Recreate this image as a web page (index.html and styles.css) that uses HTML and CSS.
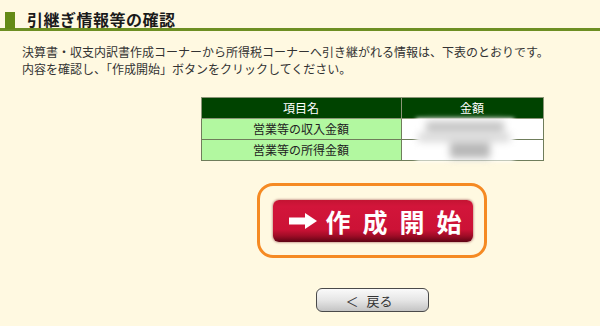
FILE: index.html
```html
<!DOCTYPE html>
<html lang="ja">
<head>
<meta charset="utf-8">
<link rel="stylesheet" href="styles.css">
</head>
<body>
<h1 class="heading"><span class="heading-mark"></span><span class="heading-text">引継ぎ情報等の確認</span></h1>
<p class="intro">決算書・収支内訳書作成コーナーから所得税コーナーへ引き継がれる情報は、下表のとおりです。<br>内容を確認し、「作成開始」ボタンをクリックしてください。</p>
<div class="center">
  <div class="table-wrap">
    <table class="info">
      <thead>
        <tr><th class="col-name">項目名</th><th class="col-amount">金額</th></tr>
      </thead>
      <tbody>
        <tr><td class="name">営業等の収入金額</td><td class="amount"></td></tr>
        <tr><td class="name">営業等の所得金額</td><td class="amount"></td></tr>
      </tbody>
    </table>
    <div class="redact"><span class="blob b1"></span><span class="blob b2"></span><span class="blob b3"></span></div>
  </div>
  <div class="start-frame">
    <button class="start-btn" type="button">
      <svg class="arrow" width="28" height="16" viewBox="0 0 28 16"><polygon points="0,4.5 16,4.5 16,0 28,8 16,16 16,11.5 0,11.5" fill="#fff"/></svg>
      <span class="start-label">作成開始</span>
    </button>
  </div>
  <button class="back-btn" type="button"><span class="lt">＜</span><span>戻る</span></button>
</div>
</body>
</html>
```
FILE: styles.css
```css
html, body {
  margin: 0;
  padding: 0;
  background: #fff9e1;
  font-family: "Noto Sans CJK JP", "Noto Sans", sans-serif;
  color: #222;
  height: 326px;
  overflow: hidden;
}
.heading {
  margin: 12px 0 0 0;
  height: 16px;
  display: flex;
  align-items: flex-end;
  border-bottom: 3px solid #6d8f22;
  font-size: 16px;
  line-height: 16px;
  font-weight: bold;
}
.heading-mark {
  width: 10px;
  height: 17px;
  margin: 0 12px -1px 5px;
  background: #648a15;
  flex: none;
}
.heading-text {
  color: #1a1a1a;
  letter-spacing: 0.5px;
  position: relative;
  top: -1px;
}
.intro {
  margin: 12px 0 0 22px;
  font-size: 12px;
  line-height: 17px;
  color: #333;
}
.center {
  padding-left: 144px;
  display: flex;
  flex-direction: column;
  align-items: center;
}
.table-wrap {
  margin-top: 20px;
  position: relative;
}
.info {
  border-collapse: collapse;
  width: 343px;
  font-size: 12px;
  border: 1px solid #8c9578;
}
.info th {
  background: #004300;
  color: #fff;
  font-weight: normal;
  height: 20px;
  padding: 0;
  border: 1px solid #8c9578;
  line-height: 20px;
}
.col-name { width: 199px; }
.info td {
  height: 20px;
  padding: 0;
  border: 1px solid #6f7d5b;
  line-height: 20px;
}
.name {
  background: #b2f8a0;
  text-align: center;
  color: #222;
}
.amount {
  background: #fff;
}
.redact {
  position: absolute;
  left: 215px;
  top: 21px;
  width: 98px;
  height: 43px;
  background: #fff;
  filter: blur(2px);
}
.blob {
  position: absolute;
  filter: blur(3px);
}
.b1 { left: 10px; top: 3px; width: 78px; height: 13px; background: #c8c8c8; }
.b2 { left: 2px; top: 15px; width: 92px; height: 9px; background: #dadada; }
.b3 { left: 34px; top: 24px; width: 40px; height: 16px; background: #b8b8b8; }
.start-frame {
  margin-top: 22px;
  width: 224px;
  height: 69px;
  border: 3px solid #f58a23;
  border-radius: 16px;
  display: flex;
  align-items: center;
  justify-content: center;
}
.start-btn {
  width: 200px;
  height: 42px;
  margin: 1px 0 0 1px;
  border: none;
  border-radius: 6px;
  background: linear-gradient(to bottom, #c41433 0%, #d2153a 15%, #cc1236 70%, #a10c27 85%, #5e0414 100%);
  box-shadow: 0 0 2px 1px rgba(120, 20, 30, 0.35);
  display: flex;
  align-items: center;
  justify-content: center;
  padding: 0 0 0 6px;
  gap: 8px;
  font-family: "Noto Sans CJK JP", sans-serif;
}
.arrow { flex: none; }
.start-label {
  color: #fff;
  font-size: 25px;
  font-weight: bold;
  letter-spacing: 12px;
  line-height: 28px;
  margin-right: -12px;
}
.back-btn {
  margin-top: 30px;
  width: 113px;
  height: 24px;
  border: 1.5px solid #4a4a4a;
  border-radius: 6px;
  background: linear-gradient(to bottom, #fafafa 0%, #e6e6e6 50%, #c4c4c4 100%);
  display: flex;
  align-items: center;
  justify-content: center;
  gap: 8px;
  padding: 0;
  font-family: "Noto Sans CJK JP", sans-serif;
  font-size: 13px;
  color: #333;
}
.lt { margin-left: -6px; }
```
